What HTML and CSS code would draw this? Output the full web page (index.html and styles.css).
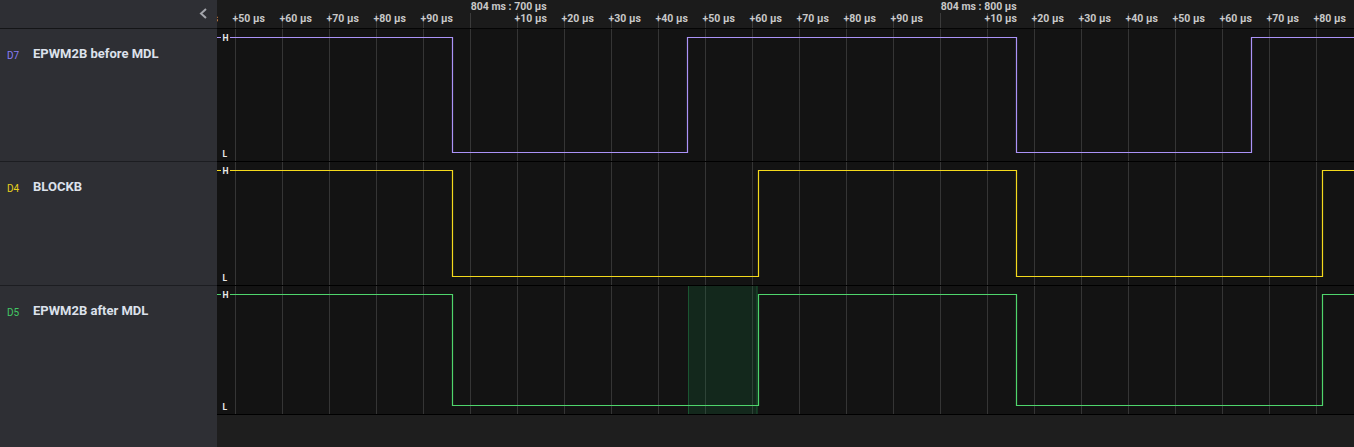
FILE: index.html
```html
<!DOCTYPE html>
<html>
<head>
<meta charset="utf-8">
<link rel="stylesheet" href="styles.css">
</head>
<body>
<div class="app">
  <div class="row head">
    <div class="side side-head">
      <svg class="chev" width="9" height="11" viewBox="0 0 9 11"><polyline points="7,1 2,5.5 7,10" fill="none" stroke="#a3a5ab" stroke-width="2"/></svg>
    </div>
    <div class="ruler">
      <svg class="ruler-svg" width="1137" height="28">
        <g class="minor">
          <text x="-31.4" y="21.7">+40 µs</text>
          <text x="15.6" y="21.7">+50 µs</text>
          <text x="62.6" y="21.7">+60 µs</text>
          <text x="109.6" y="21.7">+70 µs</text>
          <text x="156.6" y="21.7">+80 µs</text>
          <text x="203.6" y="21.7">+90 µs</text>
          <text x="297.6" y="21.7">+10 µs</text>
          <text x="344.6" y="21.7">+20 µs</text>
          <text x="391.6" y="21.7">+30 µs</text>
          <text x="438.6" y="21.7">+40 µs</text>
          <text x="485.6" y="21.7">+50 µs</text>
          <text x="532.6" y="21.7">+60 µs</text>
          <text x="579.6" y="21.7">+70 µs</text>
          <text x="626.6" y="21.7">+80 µs</text>
          <text x="673.6" y="21.7">+90 µs</text>
          <text x="767.6" y="21.7">+10 µs</text>
          <text x="814.6" y="21.7">+20 µs</text>
          <text x="861.6" y="21.7">+30 µs</text>
          <text x="908.6" y="21.7">+40 µs</text>
          <text x="955.6" y="21.7">+50 µs</text>
          <text x="1002.6" y="21.7">+60 µs</text>
          <text x="1049.6" y="21.7">+70 µs</text>
          <text x="1096.6" y="21.7">+80 µs</text>
        </g>
        <g class="major">
          <text x="253.8" y="10">804 ms : 700 µs</text>
          <text x="723.8" y="10">804 ms : 800 µs</text>
        </g>
      </svg>
    </div>
  </div>

  <div class="row sig r1">
    <div class="side label"><span class="tag t-purple">D7</span><span class="name">EPWM2B before MDL</span></div>
    <div class="wave">
      <svg class="wave-svg" width="1137" height="132">
        <path d="M0 8.5H235.5V123.5H470.5V8.5H799.5V123.5H1034.5V8.5H1137" class="sig-purple"/>
        <rect x="4" y="3.5" width="9" height="10" class="lvl-bg"/>
        <text x="5.5" y="11.6" class="lvl">H</text>
        <text x="5.5" y="127.5" class="lvl">L</text>
      </svg>
    </div>
  </div>

  <div class="row sig r2">
    <div class="side label"><span class="tag t-yellow">D4</span><span class="name">BLOCKB</span></div>
    <div class="wave">
      <svg class="wave-svg" width="1137" height="123">
        <path d="M0 8.5H235.5V114.5H541.5V8.5H799.5V114.5H1105.5V8.5H1137" class="sig-yellow"/>
        <rect x="4" y="3.5" width="9" height="10" class="lvl-bg"/>
        <text x="5.5" y="11.6" class="lvl">H</text>
        <text x="5.5" y="118.5" class="lvl">L</text>
      </svg>
    </div>
  </div>

  <div class="row sig r3">
    <div class="side label"><span class="tag t-green">D5</span><span class="name">EPWM2B after MDL</span></div>
    <div class="wave">
      <svg class="wave-svg" width="1137" height="128">
        <rect x="471" y="0" width="69.5" height="128" class="hl"/>
        <path d="M471.5 0V128M540 0V128" class="hl-edge"/>
        <path d="M0 8.5H235.5V119.5H541.5V8.5H799.5V119.5H1105.5V8.5H1137" class="sig-green"/>
        <rect x="4" y="3.5" width="9" height="10" class="lvl-bg"/>
        <text x="5.5" y="11.6" class="lvl">H</text>
        <text x="5.5" y="123.5" class="lvl">L</text>
      </svg>
    </div>
  </div>

  <div class="row foot">
    <div class="side"></div>
    <div class="foot-area"></div>
  </div>
</div>
</body>
</html>
```

FILE: styles.css
```css
html, body {
  margin: 0;
  padding: 0;
}
body {
  background: #131313;
  font-family: Roboto, "Liberation Sans", sans-serif;
  overflow: hidden;
}
.app {
  display: flex;
  flex-direction: column;
  width: 1354px;
  height: 447px;
}
.row {
  display: flex;
  flex: none;
}
.side {
  width: 217px;
  flex: none;
  background: #2e2f34;
  box-sizing: border-box;
}

/* header */
.head {
  height: 29px;
}
.side-head {
  display: flex;
  justify-content: flex-end;
  align-items: flex-start;
  padding: 8px 9px 0 0;
  border-bottom: 1px solid #141517;
}
.chev {
  display: block;
}
.ruler {
  flex: 1;
  overflow: hidden;
  box-sizing: border-box;
  border-bottom: 1px solid #050505;
  background-color: #1b1b1b;
  background-image: linear-gradient(90deg, #3b3b3b 0 1px, transparent 1px);
  background-size: 47px 15px;
  background-position: 18px 13px;
  background-repeat: repeat-x;
}
.ruler-svg {
  display: block;
  font-family: Roboto, "Liberation Sans", sans-serif;
  font-weight: 700;
  font-size: 10.5px;
}
.ruler-svg text {
  fill: #c8c8c8;
}

/* signal rows */
.r1 { height: 133px; }
.r2 { height: 124px; }
.r3 { height: 129px; }
.label {
  display: flex;
  align-items: flex-start;
  padding: 17px 0 0 7px;
}
.r1 .label, .r2 .label {
  border-bottom: 1px solid #1c1d21;
}
.tag {
  width: 26px;
  flex: none;
  font-size: 10px;
  line-height: 14px;
  margin-top: 3px;
}
.t-purple { color: #8a7cf7; }
.t-yellow { color: #e7d21c; }
.t-green { color: #43c965; }
.name {
  font-size: 13px;
  font-weight: 700;
  line-height: 15px;
  color: #dce1eb;
}
.wave {
  flex: 1;
  overflow: hidden;
  box-sizing: border-box;
  border-bottom: 1px solid #000;
  background-color: #131313;
  background-image: linear-gradient(90deg, #353535 0 1px, transparent 1px);
  background-size: 47px 100%;
  background-position: 18px 0;
}
.wave-svg {
  display: block;
}
.sig-purple, .sig-yellow, .sig-green {
  fill: none;
  stroke-width: 1.2;
}
.sig-purple { stroke: #ab93f8; }
.sig-yellow { stroke: #f4d91c; }
.sig-green { stroke: #4fd56c; }
.lvl-bg { fill: #131313; }
.lvl {
  font-family: Roboto, "Liberation Sans", sans-serif;
  font-weight: 700;
  font-size: 8.5px;
  fill: #e8e8e8;
}
.hl { fill: rgba(24, 120, 64, 0.22); }
.hl-edge {
  fill: none;
  stroke: rgba(40, 170, 90, 0.35);
  stroke-width: 1;
}

/* footer */
.foot {
  flex: 1;
}
.foot-area {
  flex: 1;
  background: #1e1e1e;
}
```
